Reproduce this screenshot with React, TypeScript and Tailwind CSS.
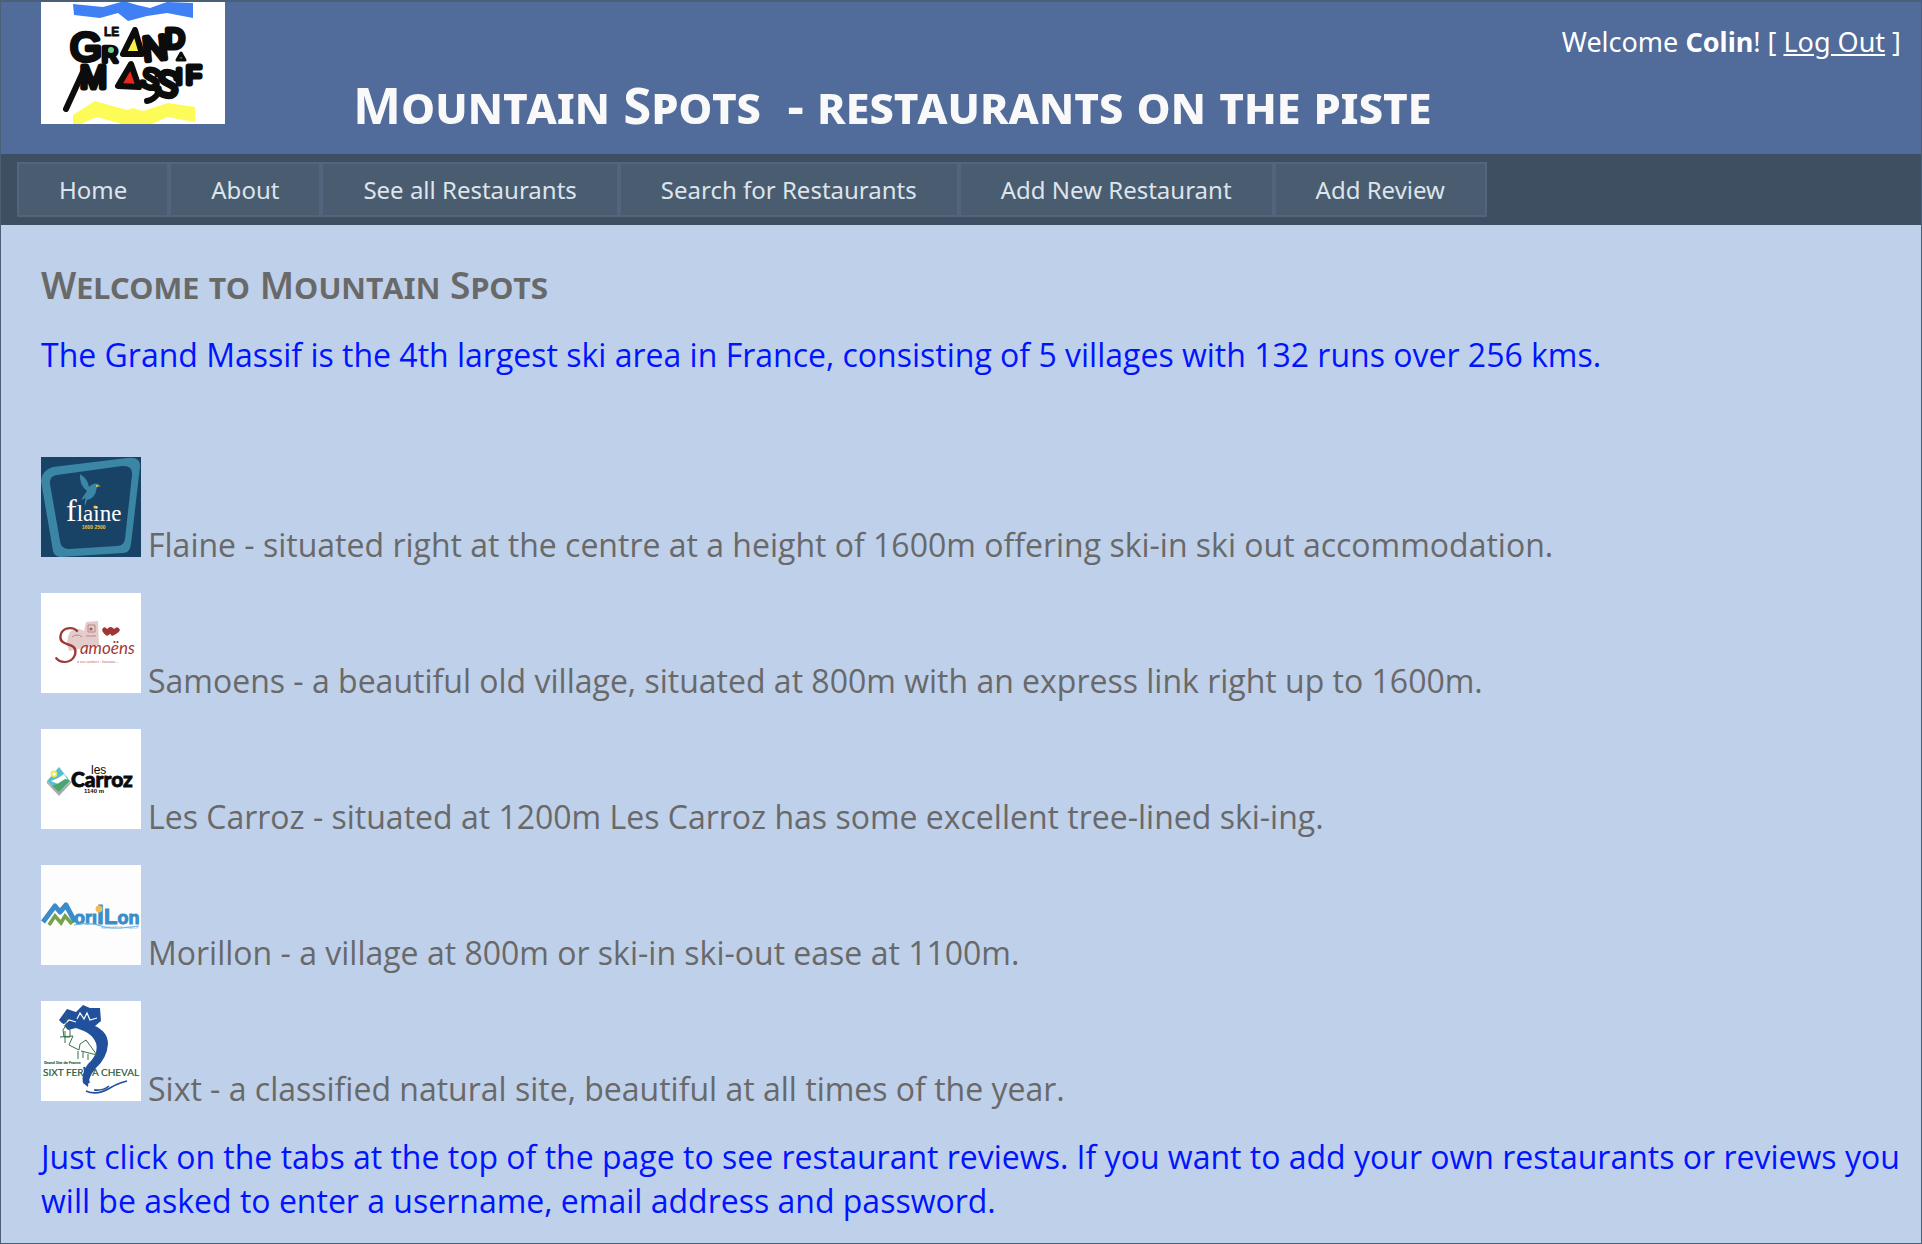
import React from "react";

function GrandMassifLogo() {
  const ink = { fill: "#0c0c0c", stroke: "#0c0c0c", strokeLinejoin: "round" as const, strokeLinecap: "round" as const, fontFamily: "'Liberation Sans', sans-serif" };
  return (
    <svg role="img" aria-label="Le Grand Massif" width="184" height="122" viewBox="0 0 184 122" className="block shrink-0">
      <rect width="184" height="122" fill="#fff" />
      <path d="M32 2 62 5 80 0 86 0 96 3 109 6 126 0 152 1V16L126 11 106 14 87 19 77 11 59 16 33 13Z" fill="#3f81f5" />
      <path d="M32 113 54 99 86 108 92 106 102 109 127 101 154 105V120L126 115 111 122H81L56 115 39 122H32Z" fill="#fdfb57" />
      <g {...ink}>
        <text x="29" y="59" fontSize="41" strokeWidth="4.5">G</text>
        <text x="63" y="34" fontSize="12" strokeWidth="0.8" fontWeight="700">LE</text>
        <text x="61" y="60" fontSize="22" strokeWidth="4.5">R</text>
        <text x="103" y="59" fontSize="34" strokeWidth="5" transform="rotate(-6 103 59)">N</text>
        <text x="124" y="46" fontSize="27" strokeWidth="5">D</text>
        <text x="39" y="86" fontSize="32" strokeWidth="5">M</text>
        <text x="100" y="86" fontSize="28" strokeWidth="4.5" transform="rotate(14 108 78)">S</text>
        <text x="115" y="93" fontSize="36" strokeWidth="4.5" transform="rotate(14 122 80)">S</text>
        <text x="135" y="82" fontSize="22" strokeWidth="5">I</text>
        <text x="145" y="82" fontSize="25" strokeWidth="5">F</text>
      </g>
      <path d="M25 107 42 70M106 99q7-1 12-9" fill="none" stroke="#0c0c0c" strokeWidth="6" strokeLinecap="round" />
      <circle cx="70" cy="48" r="3" fill="#6fd08f" />
      <g stroke="#0c0c0c" strokeLinejoin="round">
        <path d="M94 28 82 52H101Z" fill="#f7f04a" strokeWidth="6" />
        <path d="M90 62 77 84 98 85Z" fill="#e6281e" strokeWidth="6" />
        <path d="M140 51 136 58H144Z" fill="#2f8d58" strokeWidth="3" />
      </g>
    </svg>
  );
}

function FlaineLogo() {
  return (
    <svg role="img" aria-label="Flaine" width="100" height="100" viewBox="0 0 100 100" className="mr-[7px] inline-block align-baseline">
      <rect width="100" height="100" fill="#184266" />
      <path d="M0 24Q1 13 12 10L86 1Q100-1 99 10L90 87Q89 96 82 96L19 100Q13 99 12 94Z" fill="#3a86a4" />
      <path d="M9 27Q8 19 16 18L81 9Q92 8 91 18L84 82Q83 89 76 89L28 92Q20 92 19 84Z" fill="#184266" />
      <path d="M39 17Q47 22 48 30Q52 25 58 27Q55 30 55 34Q54 41 46 43L44 49Q43 44 45 41L40 43Q43 38 46 34Q38 28 39 17Z" fill="#3a86a4" />
      <path d="M55 28 60 29 55 30Z" fill="#f2c744" />
      <text x="25" y="64" fill="#fff" fontFamily="'Liberation Serif', serif" fontSize="32">
        f<tspan fontSize="23">laine</tspan>
      </text>
      <circle cx="54" cy="50" r="1.6" fill="#f2c744" />
      <text x="41" y="72" fontSize="5" fontWeight="700" fill="#f2c744" fontFamily="'Liberation Sans', sans-serif">1600 2500</text>
    </svg>
  );
}

function SamoensLogo() {
  return (
    <svg role="img" aria-label="Samoëns" width="100" height="100" viewBox="0 0 100 100" className="mr-[7px] inline-block align-baseline">
      <rect width="100" height="100" fill="#fff" />
      <path d="M29 39Q35 33 43 38L45 29 57 28 58 52 28 58Q24 47 29 39Z" fill="#e3cccb" />
      <path d="M47 32h7v7h-7ZM31 44q5-4 10 0M45 43h10" fill="none" stroke="#ba8887" />
      <circle cx="50" cy="36" r="1.6" fill="#a65f5e" />
      <path d="M66 43Q59 38 62 35Q64 33 66 36Q70 32 72 36Q73 39 66 43ZM71 43Q66 38 69 35Q71 33 73 36Q77 32 79 37Q78 40 71 43Z" fill="#a13533" />
      <text x="13" y="70" fontSize="52" fill="#9f3937" fontFamily="Lato, sans-serif" fontStyle="italic" fontWeight="300">
        S<tspan fontSize="17" fontWeight="400" dy="-9">amoëns</tspan>
      </text>
      <text x="36" y="70" fontSize="4" fill="#b35f5d" fontStyle="italic" fontFamily="'Liberation Serif', serif">à nos sentiers · heureux…</text>
    </svg>
  );
}

function CarrozLogo() {
  return (
    <svg role="img" aria-label="Les Carroz 1140 m" width="100" height="100" viewBox="0 0 100 100" className="mr-[7px] inline-block align-baseline">
      <rect width="100" height="100" fill="#fff" />
      <path d="M6 53 18 64 30 53 18 66Z" fill="#aaa" stroke="#aaa" strokeWidth="1.5" />
      <path d="M6 52 18 38 29 52 18 63Z" fill="#57bed2" />
      <path d="M10 52Q17 50 23 45L26 50 17 55Z" fill="#fff" />
      <path d="M11 57Q19 54 24 50L29 52 18 63Z" fill="#4ca66b" />
      <circle cx="13" cy="45" r="2.6" fill="#fff" stroke="#f0e640" strokeWidth="1.6" />
      <g fill="#0a0a0a">
        <text x="50" y="45" fontSize="12" fontFamily="'Liberation Sans', sans-serif">les</text>
        <text x="30" y="58" fontSize="21" fontWeight="900" fontFamily="Lato, sans-serif" stroke="#0a0a0a" strokeWidth="0.8">Carroz</text>
        <text x="43" y="64" fontSize="6" fontWeight="700" fontFamily="'Liberation Sans', sans-serif">1140 m</text>
      </g>
    </svg>
  );
}

function MorillonLogo() {
  return (
    <svg role="img" aria-label="Morillon" width="100" height="100" viewBox="0 0 100 100" className="mr-[7px] inline-block align-baseline">
      <rect width="100" height="100" fill="#fdfdfd" />
      <path d="M2 57 14 41 19 47 25 40 34 57" fill="none" stroke="#3b8dca" strokeWidth="5" strokeLinejoin="round" />
      <path d="M8 60 14 51 20 58 24 51 31 59" fill="none" stroke="#76a24b" strokeWidth="3.6" />
      <text x="33" y="59" fontSize="18" fill="#3b8dca" stroke="#3b8dca" strokeWidth="1" fontWeight="700" fontFamily="'Liberation Sans', sans-serif">
        orı<tspan fontSize="25">l</tspan><tspan fontSize="22">L</tspan>on
      </text>
      <path d="M33 60Q50 57 60 61T98 61" fill="none" stroke="#72b2dd" strokeWidth="1.2" />
      <circle cx="58" cy="44" r="3.4" fill="#f0bd55" />
      <text x="60" y="64" fontSize="3" fill="#8bbfe0" fontFamily="'Liberation Sans', sans-serif">HAUTE SAVOIE · FRANCE</text>
    </svg>
  );
}

function SixtLogo() {
  return (
    <svg role="img" aria-label="Sixt Fer à Cheval" width="100" height="100" viewBox="0 0 100 100" className="mr-[7px] inline-block align-baseline">
      <rect width="100" height="100" fill="#fff" />
      <path d="M18 19 26 8 35 11 42 4 49 7 59 7 60 20 54 25Q67 31 67 43Q66 57 55 67Q47 76 47 86L42 82Q40 72 47 63Q58 53 55 42Q52 34 43 30L35 27 27 29Z" fill="#21509c" />
      <path d="M18 21 23 24 28 19 35 21M36 18 39 12 43 18 46 12 49 19 56 17" fill="none" stroke="#fff" strokeWidth="1.2" />
      <path d="M28 36 47 41 55 54 40 50 27 45Z" fill="#fff" />
      <path d="M25 12V24L22 29 23 36H29V29L26 24M19 36 32 35 28 44 38 49 39 43 45 39 56 54 40 50M37 50V58M42 51V57M47 53V59M24 30V42" fill="none" stroke="#35704b" strokeWidth="1" />
      <path d="M45 90Q56 95 69 87Q75 83 86 80M53 89Q62 90 68 85" fill="none" stroke="#21509c" strokeWidth="1.6" />
      <g fill="#1f5c3a" stroke="#1f5c3a" strokeWidth="0.2" fontFamily="Lato, sans-serif">
        <text x="3" y="63" fontSize="4">Grand Site de France</text>
        <text x="2" y="75" fontSize="10">SIXT FER</text>
        <text x="51" y="75" fontSize="10">A CHEVAL</text>
      </g>
      <path d="M43 66 48 82" fill="none" stroke="#21509c" strokeWidth="2" />
    </svg>
  );
}

const tabs = ["Home", "About", "See all Restaurants", "Search for Restaurants", "Add New Restaurant", "Add Review"];

const villages = [
  { Logo: FlaineLogo, text: "Flaine - situated right at the centre at a height of 1600m offering ski-in ski out accommodation." },
  { Logo: SamoensLogo, text: "Samoens - a beautiful old village, situated at 800m with an express link right up to 1600m." },
  { Logo: CarrozLogo, text: "Les Carroz - situated at 1200m Les Carroz has some excellent tree-lined ski-ing." },
  { Logo: MorillonLogo, text: "Morillon - a village at 800m or ski-in ski-out ease at 1100m." },
  { Logo: SixtLogo, text: "Sixt - a classified natural site, beautiful at all times of the year." },
];

export default function App() {
  return (
    <div className="min-h-screen border border-t-2 border-[#496077] bg-[#bfd0ea] font-['Noto_Sans','Open_Sans',sans-serif] text-[#696969]">
      <header className="flex items-start bg-[#516c9a] pb-[18px] pl-10 pr-5 text-[#f9f9f9]">
        <GrandMassifLogo />
        <h1 className="ml-32 mt-[70px] whitespace-pre text-[51px] font-bold leading-[64px] [font-variant:small-caps]">{"Mountain Spots  - restaurants on the piste"}</h1>
        <p className="ml-auto mt-6 shrink-0 text-[27px] leading-8 text-white">
          Welcome <strong>Colin</strong>! [ <a href="#logout" className="underline">Log Out</a> ]
        </p>
      </header>
      <nav className="flex bg-[#3d4f61] px-4 py-2">
        <ul className="flex">
          {tabs.map((t) => (
            <li key={t}>
              <a href="#tab" className="block border-2 border-[#52657c] bg-[#4a5c70] px-10 py-2 text-[24px] leading-[35px] text-[#dde4ec]">{t}</a>
            </li>
          ))}
        </ul>
      </nav>
      <main className="pb-4 pl-10 pr-5 pt-[38px] font-['Open_Sans','Noto_Sans',sans-serif] text-[32px] leading-[44px]">
        <h2 className="font-['Noto_Sans',sans-serif] text-[37px] font-semibold leading-[44px] [font-variant:small-caps]">Welcome to Mountain Spots</h2>
        <p className="mt-[26px] text-[#0014ff]">The Grand Massif is the 4th largest ski area in France, consisting of 5 villages with 132 runs over 256 kms.</p>
        <div className="mt-20 flex flex-col gap-[26px]">
          {villages.map(({ Logo, text }) => (
            <p key={text}><Logo />{text}</p>
          ))}
        </div>
        <p className="mt-6 text-[#0014ff]">
          Just click on the tabs at the top of the page to see restaurant reviews. If you want to add your own restaurants or reviews you will be asked to enter a username, email address and password.
        </p>
      </main>
    </div>
  );
}
